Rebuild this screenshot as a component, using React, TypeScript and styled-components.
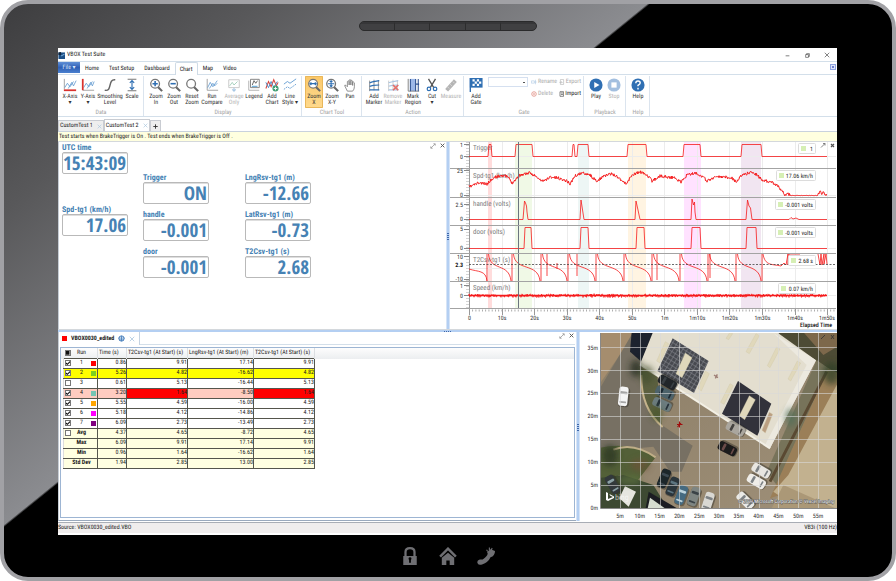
import React from "react";
import styled, { createGlobalStyle, css } from "styled-components";

const Global = createGlobalStyle`
  * { box-sizing: border-box; }
  body { margin: 0; background: #fff; text-rendering: geometricPrecision; }
  body, button, input, select, table {
    font-family: "Roboto Condensed", "Open Sans", sans-serif;
    font-size: 6px;
    line-height: 6px;
    color: #222;
    text-rendering: geometricPrecision;
  }
  button { border: 0; padding: 0; background: none; cursor: pointer; }
  svg { display: block; }
`;

/* ---------- tablet ---------- */

const Device = styled.div`
  min-height: 100vh;
  display: grid;
  grid-template-rows: 44px 1fr 42px;
  border: 4px solid #a1a1a5;
  border-radius: 28px;
  background: linear-gradient(141deg, #3d3d3f 0%, #58585a 16%, #8b8c90 40.3%, #000 40.5%);
`;

const Bezel = styled.div`
  display: flex;
  align-items: center;
  justify-content: center;
  gap: 20px;
`;

const Speaker = styled.div`
  display: grid;
  grid-template-columns: repeat(5, 1fr);
  width: 178px;
  height: 10px;
  border: 1px solid #2a2a2b;
  border-radius: 5px;
  background: #404042;
  overflow: hidden;
`;

const SpeakerSlot = styled.span`
  border-right: 1px solid #2c2c2d;
  border-top: 2px solid #363638;
  &:last-child { border-right: 0; }
`;

const HardKey = styled.button`
  width: 18px;
  height: 20px;
  color: #6f6f73;
`;

const Screen = styled.main`
  display: flex;
  flex-direction: column;
  margin: 0 55px 0 54px;
  padding-bottom: 2px;
  background: #fff;
`;

/* ---------- title and menu ---------- */

const TitleBar = styled.header`
  display: flex;
  align-items: center;
  gap: 2px;
  height: 14px;
  padding: 1px 1px 0 0;
  border-bottom: 1px solid #d3dfea;
`;

const AppTitle = styled.h1`
  margin: 0 auto 0 0;
  font-size: 6px;
  font-weight: 400;
  line-height: 8px;
`;

const WindowButton = styled.button`
  width: 18px;
  height: 8px;
  svg { margin: 0 auto; }
`;

const MenuBar = styled.nav`
  display: flex;
  align-items: flex-end;
  height: 13px;
  padding-right: 1px;
  border-bottom: 1px solid #d3dfea;
`;

const FileButton = styled.button`
  width: 22px;
  height: 11px;
  background: linear-gradient(#5f8fd6, #2f5fb5 50%, #4a80cf);
  color: #dbe8fb;
  align-self: flex-start;
`;

const MenuTab = styled.button<{ $active?: boolean }>`
  height: 12px;
  padding: 1px 4px 0;
  border: 1px solid transparent;
  border-bottom: 0;
  border-radius: 2px 2px 0 0;
  ${p => p.$active && css`
    margin-bottom: -1px;
    height: 13px;
    border-color: #cfdbe6;
    background: #fff;
  `}
`;

const CollapseButton = styled.button`
  width: 6px;
  height: 6px;
  margin: 0 0 4px auto;
  border: 1px solid #8fa4e0;
  background: linear-gradient(#6f7fd0, #6f7fd0) center / 2px 2px no-repeat, #dfe6fa;
`;

/* ---------- ribbon ---------- */

const Ribbon = styled.div`
  display: flex;
  height: 42px;
  padding-top: 1px;
  border-bottom: 1px solid #d3dfea;
`;

const Group = styled.section`
  display: flex;
  flex-direction: column;
  padding: 0 2px 0 3px;
  border-right: 1px solid #dbe4ee;
`;

const GroupTools = styled.div`
  display: flex;
  height: 32px;
`;

const GroupName = styled.h2`
  margin: 1px 0 0;
  font-size: 6px;
  font-weight: 400;
  line-height: 7px;
  text-align: center;
  color: #a3a3a3;
`;

const ToolButton = styled.button<{ $width: number; $selected?: boolean }>`
  display: flex;
  flex-direction: column;
  align-items: center;
  width: ${p => p.$width}px;
  padding-top: 2px;
  white-space: pre;
  border-radius: 1px;
  color: #333;
  svg { flex: none; margin-bottom: 2px; }
  &:disabled { color: #b3b3b3; }
  ${p => p.$selected && css`
    background: linear-gradient(#fbc766, #fcd07c 45%, #ffd98c);
    box-shadow: inset 0 0 0 1px #e9b75a;
  `}
`;

const GateSelect = styled.select`
  appearance: none;
  width: 40px;
  height: 10px;
  margin: 1px 3px 0;
  border: 1px solid #d5e0f0;
  background: linear-gradient(#555, #555) right 2px center / 2px 1px no-repeat #fff;
`;

const GateActions = styled.div`
  display: grid;
  grid-template-columns: 28px 22px;
  grid-auto-rows: 12px;
`;

const GateAction = styled.button`
  display: flex;
  align-items: center;
  gap: 1px;
  color: #222;
  &:disabled { color: #aaa; }
`;

/* ---------- documents ---------- */

const DocTabs = styled.div`
  display: flex;
  align-items: flex-end;
  height: 15px;
  border-bottom: 1px solid #c9d2dd;
`;

const DocTab = styled.button<{ $active?: boolean }>`
  display: flex;
  align-items: center;
  gap: 4px;
  height: ${p => (p.$active ? 12 : 11)}px;
  padding: 0 1px;
  border: 1px solid #c9ccd2;
  border-bottom: 0;
  background: ${p => (p.$active ? "#fff" : "#eeeeee")};
`;

const AddTab = styled(DocTab)`
  padding: 0 2px;
  color: #333;
`;

const Notice = styled.p`
  margin: 0;
  padding: 1px;
  height: 10px;
  line-height: 8px;
  background: #ffffdf;
  border-bottom: 1px solid #d4d8dc;
`;

const Workspace = styled.div`
  flex: 1;
  display: grid;
  grid-template-rows: 187fr 3px 189fr;
`;

const Split = styled.div<{ $left: number; $right: number }>`
  display: grid;
  grid-template-columns: minmax(0, ${p => p.$left}fr) 4px minmax(0, ${p => p.$right}fr);
`;

const Grip = styled.div<{ $vertical?: boolean }>`
  display: flex;
  align-items: center;
  justify-content: center;
  background: #b4cff2;
  &::after {
    content: "";
    width: ${p => (p.$vertical ? 2 : 8)}px;
    height: ${p => (p.$vertical ? 8 : 1)}px;
    background: repeating-linear-gradient(${p => (p.$vertical ? "0deg" : "90deg")}, #3f68ab 0 1px, transparent 1px 2px);
  }
  ${p => p.$vertical
    ? css`border-left: 1px solid #d6e4f7; border-right: 1px solid #d6e4f7;`
    : css`border-top: 1px solid #d4d8dc;`}
`;

const PanelButtons = styled.div`
  display: flex;
  align-items: flex-start;
  gap: 4px;
  margin-left: auto;
  padding: 1px 1px 0 0;
`;

const Gauges = styled.section`
  display: flex;
  border-left: 1px solid #c5ccd4;
  padding-left: 3px;
`;

const GaugeColumn = styled.div<{ $top: number; $gap: number; $width: number }>`
  display: flex;
  flex-direction: column;
  gap: ${p => p.$gap}px;
  width: ${p => p.$width}px;
  padding-top: ${p => p.$top}px;
`;

const Gauge = styled.div`
  width: 66px;
  color: #4682b4;
`;

const GaugeName = styled.div`
  font-size: 8px;
  line-height: 9px;
  font-weight: 700;
  white-space: nowrap;
`;

const GaugeValue = styled.output`
  display: block;
  height: 22px;
  padding-right: 1px;
  border: 1px solid #b9b9b9;
  border-radius: 2px;
  box-shadow: inset 0 1px 0 #dedede;
  font-family: "Open Sans Condensed", "Roboto Condensed", "Open Sans", sans-serif;
  font-size: 19px;
  font-weight: 700;
  line-height: 20px;
  text-align: right;
`;

/* ---------- results ---------- */

const Results = styled.section`
  display: flex;
  flex-direction: column;
  border-left: 1px solid #c5ccd4;
  border-bottom: 1px solid #9aa9bd;
  padding: 0 1px 2px;
`;

const ResultsHead = styled.div`
  display: flex;
  height: 13px;
`;

const FileTab = styled.button`
  display: flex;
  align-items: center;
  gap: 4px;
  padding: 0 4px 0 2px;
  border-right: 1px solid #c5d3e2;
  font-weight: 700;
`;

const TabRest = styled.div`
  flex: 1;
  display: flex;
  border-bottom: 1px solid #d3dfea;
`;

const Swatch = styled.span<{ $color: string }>`
  width: 5px;
  height: 5px;
  background: ${p => p.$color};
`;

const ResultsBox = styled.div`
  flex: 1;
  margin-top: 2px;
  border: 1px solid #9db5d3;
  padding-left: 2px;
  background: linear-gradient(#fdfdfd, #eceef0) top / 100% 11px no-repeat #fff;
`;

const ResultsTable = styled.table`
  width: 251px;
  table-layout: fixed;
  border-collapse: collapse;
  text-align: right;
  white-space: nowrap;
  th, td { height: 10px; padding: 0; }
`;

const HeadCell = styled.th<{ $width: number }>`
  width: ${p => p.$width}px;
  border-right: 1px solid #dcdfe2;
  font-weight: 400;
  text-align: left;
  text-indent: 1px;
`;

const Row = styled.tr<{ $fill?: string }>`
  background: ${p => p.$fill || "#fff"};
`;

const Cell = styled.td<{ $fill?: string }>`
  border: 1px solid #55554c;
  border-left-color: #444;
  background: ${p => p.$fill || "transparent"};
`;

const RunCell = styled.th`
  border: 1px solid #55554c;
  border-left-color: #ddd;
  text-align: left;
`;

const RunLabel = styled.label<{ $bold?: boolean }>`
  display: grid;
  grid-template-columns: 7px 19px 6px;
  align-items: center;
  padding-left: 1px;
  font-weight: ${p => (p.$bold ? 700 : 400)};
  text-align: center;
`;

const Check = styled.input<{ $mixed?: boolean }>`
  appearance: none;
  width: 6px;
  height: 6px;
  margin: 0;
  border: 1px solid #777;
  background: #fff;
  &:checked::after {
    content: "";
    display: block;
    width: 4px;
    height: 4px;
    background: #111;
    clip-path: ${p => (p.$mixed ? "inset(0)" : "polygon(0 35%, 35% 65%, 100% 0, 100% 35%, 35% 100%, 0 75%)")};
  }
`;

const StatusBar = styled.footer`
  display: flex;
  justify-content: space-between;
  height: 11px;
  margin-top: 1px;
  padding-top: 1px;
  border-top: 1px solid #a9adb5;
  background: #f0eded;
  line-height: 8px;
`;

const Plot = styled.svg`
  width: 100%;
  height: 100%;
`;

const PlotPanel = styled.section`
  contain: size;
  min-width: 0;
  min-height: 180px;
`;

/* ---------- icons ---------- */

const BLUE = "#2f6fb3";
const lens = <><circle cx="7" cy="6.500" r="5" stroke="#777" strokeWidth="1.500" /><path d="M10.500 10.500L15 15" stroke="#666" strokeWidth="2.400" /></>;

const icons: Record<string, React.ReactNode> = {
  xaxis: <><path d="M1.500 1V13" stroke="#999" /><path d="M2 11L5 6L8 10L12 4M6 12L10 5L12 9L15 3" stroke="#5c97cf" strokeWidth=".9" /><path d="M1 14H15" stroke="#d9322e" strokeWidth="2" /></>,
  yaxis: <><path d="M2 14H15" stroke="#999" /><path d="M3 11L6 6L9 10L13 4M7 12L11 5L13 9L15 4" stroke="#5c97cf" strokeWidth=".9" /><path d="M2 1V14" stroke="#d9322e" strokeWidth="2" /></>,
  smooth: <path d="M2 14C11 16 5 1 14 2" stroke="#666" strokeWidth="1.600" />,
  scale: <><path d="M3 1.500H13M3 14.500H13" stroke="#777" strokeWidth="1.200" /><path d="M8 3V13M5.500 5.500L8 3L10.500 5.500M5.500 10.500L8 13L10.500 10.500" stroke={BLUE} strokeWidth="1.300" /></>,
  zoomin: <>{lens}<path d="M7 3.500V9.500M4 6.500H10" stroke={BLUE} strokeWidth="1.800" /></>,
  zoomout: <>{lens}<path d="M4 6.500H10" stroke={BLUE} strokeWidth="1.800" /></>,
  zoomreset: lens,
  zoomx: <><circle cx="7" cy="6.500" r="5" fill="#fff" />{lens}<path d="M3.500 6.500H10.500M5 5L3.500 6.500L5 8M9 5L10.500 6.500L9 8" stroke={BLUE} strokeWidth="1.300" /></>,
  zoomxy: <>{lens}<path d="M3.500 6.500H10.500M7 3V10M5.500 4.500L7 3L8.500 4.500M5.500 8.500L7 10L8.500 8.500" stroke={BLUE} strokeWidth="1.200" /></>,
  compare: <><path d="M2.500 1V14H15" stroke="#999" /><path d="M3 11L6 5L9 10L14 3M5 12L9 6L11 9L14 6" stroke="#5c97cf" strokeWidth=".9" /></>,
  average: <><path d="M2 2H14V11H2Z" stroke="#c4c4c4" /><path d="M3 9L6 5L8 8L12 4" stroke="#9fcdb8" /><path d="M8 11V15M6 13L8 15L10 13" stroke="#a8c8e4" strokeWidth="1.300" /></>,
  legend: <><path d="M4 1.500H14V11H4Z" stroke="#777" /><path d="M2 3V14H14" stroke="#aaa" /><path d="M6 8L8 3L10 6L12 3" stroke="#555" /><path d="M5.500 9.500H12" stroke="#59a3d6" strokeWidth="1.200" /></>,
  addchart: <><path d="M1 12L4 4L7 10L10 2L13 9L15 5" stroke="#d9453c" strokeWidth="1.200" /><path d="M1 5L4 11L7 4L10 11L14 4" stroke="#4f89c4" strokeWidth="1.100" /><circle cx="12" cy="12" r="3.500" fill="#3f9d72" /><path d="M12 10V14M10 12H14" stroke="#fff" /></>,
  linestyle: <><path d="M1 7L5 4L8 6L15 1" stroke="#5c97cf" /><path d="M1 13L5 10L8 12L15 7" stroke="#5c97cf" strokeDasharray="2 1" /></>,
  pan: <path d="M5 15L2 9Q1.500 7.500 3.500 8.500L5 10V4Q6 2.500 7 4V8V2.500Q8 1 9 2.500V8V3Q10 2 11 3.500V8.500V5Q12 4 13 5.500V10Q13 13 11 15Z" fill="#fff" stroke="#777" strokeWidth=".9" />,
  addmarker: <><path d="M3 15V3M8 14V2M13 14V3" stroke="#666" strokeWidth=".8" /><path d="M3 5.500L6 4.500L14 3M3 9.500L7 8.500L14 8M3 13.500H14" stroke={BLUE} strokeWidth="1.400" /></>,
  delmarker: <><path d="M3 15V3M8 14V2M13 14V3" stroke="#bbb" strokeWidth=".8" /><path d="M3 5.500L6 4.500L14 3M3 9.500L7 8.500L14 8M3 13.500H14" stroke="#a9c6e3" strokeWidth="1.300" /><path d="M8 8L14 14M14 8L8 14" stroke="#e4706b" strokeWidth="2" /></>,
  region: <><path d="M5 1H11V15H5Z" fill="#9db8e8" /><path d="M2.500 1V15H15" stroke="#777" /><path d="M5 1V15M11 1V15M14 1V15M11 7H15" stroke="#2c4f8f" strokeWidth="1.200" /></>,
  cut: <><path d="M4 1L10 11M12 1L6 11" stroke="#555" strokeWidth="1.500" /><circle cx="4.500" cy="12.500" r="2" stroke={BLUE} strokeWidth="1.400" /><circle cx="11.500" cy="12.500" r="2" stroke={BLUE} strokeWidth="1.400" /></>,
  measure: <><path d="M3 14L13 3" stroke="#b5b5b5" strokeWidth="4.500" /><path d="M4 10L6 12M7 7L9 9M10 4L12 6" stroke="#e4e4e4" strokeWidth=".8" /></>,
  gate: <><path d="M1.500 0V16" stroke={BLUE} strokeWidth="1.600" /><path d="M1 0H15.500V11H1Z" fill={BLUE} /><path d="M4 1.500H6.500V4H4ZM9 1.500H11.500V4H9ZM6.500 4H9V6.500H6.500ZM11.500 4H14V6.500H11.500ZM4 6.500H6.500V9H4ZM9 6.500H11.500V9H9Z" fill="#fff" /></>,
  play: <><circle cx="8" cy="8" r="7.500" fill={BLUE} /><path d="M6 4.500L12 8L6 11.500Z" fill="#fff" /></>,
  stop: <><circle cx="8" cy="8" r="7.500" fill="#a3bfdf" /><path d="M5 5H11V11H5Z" fill="#fff" /></>,
  help: <><circle cx="8" cy="8" r="7.500" fill={BLUE} /><path d="M5.500 6Q5.500 3.500 8 3.500Q10.500 3.500 10.500 5.700Q10.500 7 8 8.500V9.500M8 11V13" stroke="#fff" strokeWidth="1.600" /></>,
  rename: <><path d="M1 5H9V11H1Z" stroke="#a9c6e3" strokeWidth="1.500" /><path d="M12 2V14M10 8H15" stroke="#a9c6e3" strokeWidth="1.500" /></>,
  remove: <><circle cx="8" cy="8" r="6" stroke="#e39a90" strokeWidth="2.500" /><path d="M6 6L10 10M10 6L6 10" stroke="#e39a90" strokeWidth="2" /></>,
  export: <path d="M4 1H13V15H4ZM1 9H9M6 6L9 9L6 12" stroke="#aaa" strokeWidth="1.500" />,
  import: <path d="M3 15V1H14V15ZM6 5H12M6 11L9 8L12 11" stroke="#333" strokeWidth="1.800" />,
  plus: <path d="M8 1V15M1 8H15" stroke="#333" strokeWidth="3" />,
  logo: <><path d="M1 1H16V16H1Z" fill="#1c4f86" /><path d="M1 1L7 0V7H1Z" fill="#12273f" /><path d="M7 9L15 5" stroke="#8fc0e8" strokeWidth="2" /></>,
  minimize: <path d="M2 9H14" stroke="#333" strokeWidth="2" />,
  restore: <path d="M2 5H11V14H2ZM5 5V2H14V11H11" stroke="#333" strokeWidth="1.800" />,
  close: <path d="M2 2L14 14M14 2L2 14" stroke="#333" strokeWidth="1.600" />,
  closeTab: <path d="M2 2L14 14M14 2L2 14" stroke="#a5c3dc" strokeWidth="2" />,
  expand: <path d="M3 13L13 3M9 2H14V7M2 9V14H7" stroke="#777" strokeWidth="1.600" />,
  shut: <path d="M2 2L14 14M14 2L2 14" stroke="#555" strokeWidth="3" />,
  globe: <><circle cx="8" cy="8" r="6" stroke={BLUE} strokeWidth="2" /><path d="M1 7H15M3 11H13M8 2V14" stroke={BLUE} strokeWidth="1.600" /></>,
  lock: <><path d="M2 8H14V16H2Z" fill="currentColor" /><path d="M4 8V4.500Q4 1 8 1Q12 1 12 4.500V8" stroke="currentColor" strokeWidth="2" /><path d="M8 10V14" stroke="#000" strokeWidth="1.600" /><circle cx="8" cy="10.500" r="1.300" fill="#000" /></>,
  home: <><path d="M1 8.500L8 1.500L15 8.500" stroke="currentColor" strokeWidth="2.200" /><path d="M2.500 9.500L8 5L13.500 9.500V16H9.500V12H6.500V16H2.500Z" fill="currentColor" /></>,
  phone: <><path d="M.5 14.500Q-.5 12 2.500 11L5 11Q9 8.500 9.500 6L9 4.500L12 2L16 3.500Q16 8 12 9Q10 13.500 4.500 15.500Q1.500 16.500 .5 14.500Z" fill="currentColor" /><path d="M9.500 4L8.500 2.500M11 3V.5M12.500 3L13.500 1" stroke="currentColor" /></>,
};

function Icon({ name, size = 14 }: { name: string; size?: number }) {
  return <svg width={size} height={size} viewBox="0 0 16 16" fill="none" aria-hidden="true">{icons[name]}</svg>;
}

/* ---------- ribbon content ---------- */

type Tool = { icon: string; text: string; width: number; off?: boolean; selected?: boolean };

const t = (icon: string, text: string, width = 18, extra: Partial<Tool> = {}): Tool => ({ icon, text, width, ...extra });

const dataTools = [t("xaxis", "X-Axis\n▾"), t("yaxis", "Y-Axis\n▾"), t("smooth", "Smoothing\nLevel", 26), t("scale", "Scale")];
const displayTools = [
  t("zoomin", "Zoom\nIn"), t("zoomout", "Zoom\nOut"), t("zoomreset", "Reset\nZoom"),
  t("compare", "Run\nCompare", 22), t("average", "Average\nOnly", 22, { off: true }),
  t("legend", "Legend"), t("addchart", "Add\nChart"), t("linestyle", "Line\nStyle ▾"),
];
const chartTools = [t("zoomx", "Zoom\nX", 18, { selected: true }), t("zoomxy", "Zoom\nX-Y"), t("pan", "Pan")];
const actionTools = [
  t("addmarker", "Add\nMarker"), t("delmarker", "Remove\nMarker", 20, { off: true }),
  t("region", "Mark\nRegion", 20), t("cut", "Cut\n▾"), t("measure", "Measure", 20, { off: true }),
];

function RibbonGroup({ name, tools, children }: { name: string; tools: Tool[]; children?: React.ReactNode }) {
  return (
    <Group>
      <GroupTools>
        {tools.map(x => (
          <ToolButton key={x.text} $width={x.width} $selected={x.selected} disabled={x.off}>
            <Icon name={x.icon} />{x.text}
          </ToolButton>
        ))}
        {children}
      </GroupTools>
      <GroupName>{name}</GroupName>
    </Group>
  );
}

/* ---------- chart ---------- */

function noise(seed: number) {
  let s = seed;
  return () => {
    s = (s * 16807) % 2147483647;
    return s / 2147483647 - 0.5;
  };
}

const X0 = 469, X1 = 827;

const bands = [
  { x: 488, w: 4, fill: "#ffdcdc" },
  { x: 515, w: 17, fill: "#f0f9e6" },
  { x: 578, w: 11, fill: "#edf6f5" },
  { x: 628, w: 18, fill: "#fff4e2" },
  { x: 684, w: 17, fill: "#ffe2ff" },
  { x: 741, w: 20, fill: "#f1e5f1" },
];

const square = (base: number, top: number, pulses: number[][]) =>
  `M${X0} ${base}` + pulses.map(([a, b]) => `H${a}L${a + 1} ${top}H${b - 1}L${b} ${base}`).join("") + `H${X1}`;

const triggerPath = square(156.5, 144.5, [[488, 492], [515, 533], [572, 575], [577, 589], [627, 647], [683, 701], [741, 762]]);
const doorPath = square(248.5, 227.5, [[524, 532], [580, 589], [636, 645], [691, 701], [746, 757]]);

const speedPoints: number[][] = [
  [469, 187], [478, 183], [487, 184], [493, 178], [502, 175], [508, 177], [512, 183], [520, 175], [529, 173], [534, 175],
  [540, 180], [544, 181], [550, 177], [558, 178], [567, 181], [570, 184], [575, 176], [582, 173], [589, 174], [593, 178],
  [597, 182], [603, 176], [612, 174], [618, 177], [626, 184], [632, 175], [640, 172], [647, 175], [652, 181], [660, 176],
  [668, 177], [675, 178], [681, 182], [687, 175], [696, 173], [702, 176], [707, 181], [715, 177], [725, 177], [732, 178],
  [736, 182], [742, 175], [752, 172], [757, 175], [762, 180], [772, 182], [778, 186], [782, 191], [785, 195], [788, 193],
  [790, 195.500], [818, 195.500], [820, 191], [822, 194], [824, 192], [825, 195], [827, 195],
];

function jitter(points: number[][], seed: number) {
  const r = noise(seed);
  let d = "";
  for (let i = 1; i < points.length; i++) {
    const [ax, ay] = points[i - 1], [bx, by] = points[i];
    const flat = ay > 195 && by > 195;
    for (let x = ax; x < bx; x += 0.5) {
      const y = ay + ((by - ay) * (x - ax)) / (bx - ax) + r() * (flat ? 0.3 : 3);
      d += `${d ? "L" : "M"}${x} ${y.toFixed(1)}`;
    }
  }
  return d;
}

const speedPath = jitter(speedPoints, 11);
const flatPath = (() => {
  const r = noise(5);
  let d = `M${X0} 295.500`;
  for (let x = X0; x < X1; x += 0.5) d += `L${x} ${(295.7 + r() * 3.6).toFixed(1)}`;
  return d;
})();

const handlePath = `M${X0} 219.500H523L524.500 201L525.500 203L526.500 206L527 212L528 219.500H580L581 200L583 213L584 219.500H635L636 201L638 210L640 219.500
 H691L692 199L693.500 205L694.500 202L695 212L696 219.500H746L747.500 200L749 206L750.500 208L752 219.500H789L791 217.500L793 219L796 218L799 219.500H${X1}`;

const asymptotes = [487, 512, 541, 568, 596, 624, 652, 680, 708, 736, 762];
const t2cPath = (() => {
  let d = "M469 269C478 272 486 270 487 281";
  for (let i = 0; i < asymptotes.length - 1; i++) {
    const a = asymptotes[i], b = asymptotes[i + 1];
    d += `M${a} 281V254M${a + 1.5} 254C${a + 3} 272 ${b - 3} 262 ${b - 1} 281`;
  }
  d += "M762 281V254M763 254C765 266 772 264 781 266L784 263L786 265L788 254V265L789 254H800";
  d += "M547 254V276M577 254V276M657 254V280M710 254V278M557 269V263";
  d += "M818 254L820 265L821 254L822 265L824 254V264L826 254L827 264";
  return d;
})();

const legends = [
  { x: 798, y: 143, w: 18, text: "1" },
  { x: 776, y: 170, w: 40, text: "17.06 km/h" },
  { x: 775, y: 199, w: 41, text: "-0.001 volts" },
  { x: 775, y: 227, w: 41, text: "-0.001 volts" },
  { x: 788, y: 255, w: 28, text: "2.68 s" },
  { x: 778, y: 283, w: 38, text: "0.07 km/h" },
];

const series = [[149, "Trigger"], [177, "Spd-tg1 (km/h)"], [205, "handle (volts)"], [233, "door (volts)"], [261, "T2Csv-tg1 (s)"], [289, "Speed (km/h)"]] as const;
const yLabels = [[147, "1"], [159, "0"], [173, "25"], [197, "0"], [207, "2.5"], [221, "0"], [231, "5"], [250, "0"], [259, "10"], [281, "-10"], [288, "1"], [298, "0"]] as const;
const times = ["0", "10s", "20s", "30s", "40s", "50s", "1m", "1m10s", "1m20s", "1m30s", "1m40s", "1m50s"];

function ChartPanel() {
  return (
    <PlotPanel>
      <Plot viewBox="450 142 387 187" preserveAspectRatio="xMidYMin meet" role="img" aria-label="Channel charts" fontSize="6">
        {bands.map(b => <rect key={b.x} x={b.x} y="142" width={b.w} height="166" fill={b.fill} />)}
        <g stroke="#ececec">
          {times.map((_, i) => <path key={i} d={`M${469.5 + Math.round(i * 32.55)} 142V308`} />)}
          {[156.5, 195.5, 219.5, 248.5, 268.5, 295.5].map(y => <path key={y} d={`M470 ${y}H836`} />)}
        </g>
        <g fill="#808080" fontSize="7">{series.map(([y, s]) => <text key={s} x="473" y={y + 1}>{s}</text>)}</g>
        <path d="M469.500 142V308" stroke="#999" />
        <path d="M467.500 142V308" stroke="#aaa" strokeWidth="3" strokeDasharray=".6 2.400" />
        <g stroke="#888">{[144.5, 156.5, 170.5, 195.5, 204.5, 219.5, 229.5, 248.5, 256.5, 279.5, 285.5, 295.5].map(y => <path key={y} d={`M464 ${y}H469`} />)}</g>
        <g fill="none" stroke="#f5191b" strokeWidth=".8">
          <path d={triggerPath} /><path d={speedPath} strokeWidth="1" /><path d={handlePath} />
          <path d={doorPath} /><path d={t2cPath} /><path d={flatPath} />
          <path d="M469 295.500H827" strokeWidth="1.600" />
        </g>
        <path d="M469 264.500H836" stroke="#444" strokeDasharray="2 1.500" strokeWidth=".8" />
        <path d="M518.500 142V308" stroke="#6b7480" />
        <g stroke="#a3a3a3">{[168.5, 197.5, 225.5, 253.5, 281.5, 308.5].map(y => <path key={y} d={`M450 ${y}H836`} />)}</g>
        <path d="M469 310.500H836" stroke="#999" strokeWidth="2" strokeDasharray=".8 2.455" />
        <g stroke="#999">{times.map((_, i) => <path key={i} d={`M${469.5 + Math.round(i * 32.55)} 309V315`} />)}</g>
        <g textAnchor="end" fill="#333">
          {yLabels.map(([y, s]) => <text key={y} x="463" y={y}>{s}</text>)}
          <text x="463" y="267" fontWeight="700" fill="#111">2.3</text>
        </g>
        <g textAnchor="middle" fill="#333">
          {times.map((s, i) => <text key={s} x={Math.min(469.5 + i * 32.55, 827)} y="320">{s}</text>)}
        </g>
        <text x="832" y="327" fontSize="6" fontWeight="500" textAnchor="end" fill="#111">Elapsed Time</text>
        {legends.map(l => (
          <g key={l.y}>
            <rect x={l.x + 0.5} y={l.y + 0.5} width={l.w - 1} height="10" rx="1" fill="#fff" stroke="#dcdcdc" />
            <rect x={l.x + 3} y={l.y + 3} width="5" height="5" fill="#d6efb4" />
            <text x={l.x + l.w - 3} y={l.y + 8} textAnchor="end" fill="#222">{l.text}</text>
          </g>
        ))}
        <path d="M821 147.500L825 143.500M823 143.500H825V145.500" stroke="#666" fill="none" strokeWidth=".8" />
        <path d="M831 144L834 147M834 144L831 147" stroke="#555" strokeWidth="1.200" />
      </Plot>
    </PlotPanel>
  );
}

/* ---------- map ---------- */

type CarProps = { x: number; y: number; a: number; fill: string; glass?: string };

function Car({ x, y, a, fill, glass = "#7d8285" }: CarProps) {
  return (
    <g transform={`translate(${x} ${y}) rotate(${a})`}>
      <rect x="-14" y="-26" width="33" height="58" rx="10" fill="#2d2a24" opacity=".45" />
      <rect x="-14" y="-29" width="28" height="58" rx="9" fill={fill} />
      <rect x="-11" y="-15" width="22" height="8" rx="3" fill={glass} />
      <rect x="-10" y="15" width="20" height="5" rx="2" fill={glass} />
    </g>
  );
}

const cars: CarProps[] = [
  { x: 160, y: 214, a: 6, fill: "#f4f4f4", glass: "#a5a5a5" },
  { x: 292, y: 172, a: -60, fill: "#22262a", glass: "#3a4045" },
  { x: 284, y: 204, a: -65, fill: "#4d626a", glass: "#1f2a33" },
  { x: 276, y: 238, a: -65, fill: "#6c7c7f", glass: "#26323a" },
  { x: 496, y: 312, a: -62, fill: "#aaa69e", glass: "#45423f" },
  { x: 472, y: 371, a: -63, fill: "#1d1a1b", glass: "#6a4c4a" },
  { x: 573, y: 437, a: -60, fill: "#e8e6e1" },
  { x: 559, y: 469, a: -60, fill: "#efede8" },
  { x: 526, y: 527, a: -45, fill: "#e9e9e6" },
  { x: 282, y: 460, a: 22, fill: "#1f2529", glass: "#3d4a52" },
  { x: 308, y: 484, a: 22, fill: "#2b343a", glass: "#5b7480" },
  { x: 334, y: 510, a: 20, fill: "#456a80", glass: "#bcd3dc" },
  { x: 372, y: 514, a: 20, fill: "#7e8582", glass: "#3a4346" },
  { x: 414, y: 530, a: 18, fill: "#d9d8d3" },
  { x: 128, y: 478, a: -30, fill: "#30383a", glass: "#8ba0a5" },
];

const mapX = [5, 10, 15, 20, 25, 30, 35, 40, 45, 50, 55];
const mapY = [0, 5, 10, 15, 20, 25, 30, 35];

function MapPanel() {
  return (
    <PlotPanel>
      <Plot viewBox="580 332 257 189" preserveAspectRatio="xMidYMin slice" role="img" aria-label="Aerial map" fontSize="6">
        <defs>
          <clipPath id="photo"><rect x="92" y="24" width="710" height="525" /></clipPath>
          <filter id="soft"><feGaussianBlur stdDeviation="2.200" /></filter>
          <filter id="shade" x="-30%" y="-30%" width="160%" height="160%"><feGaussianBlur stdDeviation="9" /></filter>
          <pattern id="cells" width="12" height="12" patternUnits="userSpaceOnUse" patternTransform="rotate(32)">
            <rect width="12" height="12" fill="#474950" /><path d="M0 0H12M0 0V12" stroke="#8b8d92" strokeWidth="3" />
          </pattern>
          <linearGradient id="ground" x1="0" y1="0" x2="1" y2="1"><stop stopColor="#8b7d66" /><stop offset="1" stopColor="#9f9078" /></linearGradient>
        </defs>
        <g transform="translate(570 325) scale(.33333)">
          <g clipPath="url(#photo)">
            <g filter="url(#soft)">
              <rect x="80" y="10" width="740" height="550" fill="url(#ground)" />
              <path d="M80 10H205L80 190Z" fill="#a58d6e" />
              <path d="M190 20L90 190V380L250 365L280 410L300 440L335 440L368 362L275 300L215 160L225 40Z" fill="#777063" />
              <path d="M610 10H810V150L740 110L640 60Z" fill="#4d4b35" />
              <path d="M690 10H810V60L760 90Z" fill="#7d684b" />
              <path d="M740 105L775 130L620 480L590 440Z" fill="#77735a" />
              <path d="M775 130L815 150L660 500L600 520Z" fill="#9b7f58" />
              <path d="M800 180L820 160V560H700L610 500L655 450Z" fill="#c2b18f" />
              <path d="M640 480L820 560H600Z" fill="#ab9877" />
              <path d="M770 140L600 470" stroke="#5a4930" strokeWidth="9" />
              <path d="M215 130L262 155L275 300Q232 270 220 210Z" fill="#5c613f" />
              <path d="M214 150Q212 250 278 306" stroke="#c5b38c" strokeWidth="6" fill="none" />
              <path d="M80 370Q180 345 257 397L200 470L150 450L80 480Z" fill="#536038" />
              <path d="M130 374Q190 350 257 397" stroke="#bfae87" strokeWidth="6" fill="none" />
              <path d="M80 460L160 450L250 480L300 560H80Z" fill="#3c4830" />
              <path d="M185 20H252L214 110L180 80Z" fill="#1f242d" />
              <path d="M252 14H610L738 106L600 370L210 118Z" fill="#e3decf" />
              <path d="M610 24L738 106L600 370L585 360L710 120Z" fill="#ece9df" />
              <path d="M210 118L600 370" stroke="#f3f0e5" strokeWidth="6" />
              <path d="M308 40L416 108L372 204L262 138Z" fill="url(#cells)" />
              <path d="M504 168L604 236L562 332L456 266Z" fill="#30303a" />
              <g fill="#e0d8bb" stroke="#cdc5a5" strokeWidth="1">
                <path d="M346 84L366 98L336 158L318 146Z" /><path d="M538 212L556 224L524 284L508 272Z" />
                <path d="M286 50L296 56L270 114L260 108Z" /><path d="M406 138L418 146L394 198L384 190Z" />
                <path d="M480 176L490 182L462 238L452 232Z" /><path d="M558 26L568 32L538 86L528 80Z" />
                <path d="M620 66L630 72L600 128L592 122Z" /><path d="M682 108L692 114L662 168L654 162Z" />
                <path d="M598 262L608 268L586 324L576 316Z" fill="#bb9f82" /><path d="M480 22L488 26L476 44L468 40Z" />
              </g>
              <path d="M432 150L444 158M436 160L442 148" stroke="#9d7d75" strokeWidth="4" />
              <path d="M236 500L330 555H226Z" fill="#1b1f22" />
              <path d="M240 518L292 555H232Z" fill="#d6dccf" />
              {cars.map(c => <Car key={`${c.x}-${c.y}`} {...c} />)}
              <path d="M165 484L198 500L176 545L148 520Z" fill="#e6e6e0" />
            </g>
            <g filter="url(#shade)" opacity=".75">
              <ellipse cx="198" cy="130" rx="18" ry="26" fill="#22291f" /><ellipse cx="230" cy="150" rx="20" ry="28" fill="#44502f" />
              <ellipse cx="120" cy="392" rx="24" ry="32" fill="#2b3524" /><ellipse cx="210" cy="420" rx="28" ry="18" fill="#6d5237" />
              <ellipse cx="260" cy="266" rx="16" ry="20" fill="#48582c" /><ellipse cx="180" cy="465" rx="36" ry="12" fill="#5f7440" />
              <ellipse cx="785" cy="145" rx="26" ry="34" fill="#2f3f26" /><ellipse cx="662" cy="278" rx="16" ry="28" fill="#51705a" />
            </g>
          </g>
        </g>
        <g stroke="#d9d9d9" strokeOpacity=".6">
          {mapX.map((m, i) => <path key={m} d={`M${Math.round(620 + i * 19.8) + 0.5} 333V508`} />)}
          {mapY.slice(1).map((m, i) => <path key={m} d={`M600 ${Math.round(485 - i * 23) + 0.5}H837`} />)}
        </g>
        <path d="M600.500 333V508.500H837" stroke="#888" fill="none" />
        <g textAnchor="end" fill="#333">{mapY.map((m, i) => <text key={m} x="598" y={510 - Math.round(i * 22.9)}>{m}m</text>)}</g>
        <g textAnchor="middle" fill="#333">{mapX.map((m, i) => <text key={m} x={620 + i * 19.8} y="518">{m}m</text>)}</g>
        <path d="M677 424.500H682.500M679.500 421.500V427.500M681 423L677.500 427" stroke="#a00c0c" strokeWidth="1.100" />
        <path d="M606 492L608 493V499L613 497L610 495.500L609.500 494L614 496.500V498L608 501L606 500Z" fill="#fff" />
        <text x="615" y="500" fontSize="8" fill="#fff" fillOpacity=".6">bing</text>
        <text x="834" y="503" fontSize="5" textAnchor="end" fill="#fff" stroke="#555" strokeWidth=".8" paintOrder="stroke">© 2021 Microsoft Corporation  © Vexcel Imaging</text>
        <path d="M821 339L825 335M831 335L834 339M834 335L831 339" stroke="#333" strokeWidth=".8" />
      </Plot>
    </PlotPanel>
  );
}

/* ---------- results data ---------- */

type Run = { name: string; on?: boolean; color?: string; fill?: string; hot?: boolean; v: string[] };

const runs: Run[] = [
  { name: "1", on: true, color: "#ff0000", v: ["0.86", "9.91", "17.14", "9.91"] },
  { name: "2", on: true, color: "#7ccf1f", fill: "#ffff00", v: ["5.26", "4.82", "-16.62", "4.82"] },
  { name: "3", on: false, v: ["0.61", "5.13", "-16.44", "5.13"] },
  { name: "4", on: true, color: "#76c5b4", fill: "#ffccc0", hot: true, v: ["3.20", "1.64", "-8.50", "1.64"] },
  { name: "5", on: true, color: "#ffa500", v: ["5.55", "4.59", "-16.00", "4.59"] },
  { name: "6", on: true, color: "#ff00ff", v: ["5.18", "4.12", "-14.86", "4.12"] },
  { name: "7", on: true, color: "#800080", v: ["6.09", "2.73", "-13.49", "2.73"] },
];

const stats: Run[] = [
  { name: "Avg", on: false, v: ["4.37", "4.65", "-8.72", "4.65"] },
  { name: "Max", v: ["6.09", "9.91", "17.14", "9.91"] },
  { name: "Min", v: ["0.96", "1.64", "-16.62", "1.64"] },
  { name: "Std Dev", v: ["1.94", "2.85", "13.00", "2.85"] },
];

function RunRow({ run, stat }: { run: Run; stat?: boolean }) {
  return (
    <Row $fill={stat ? "#ffffe1" : run.fill}>
      <RunCell scope="row">
        <RunLabel $bold={stat}>
          {run.on === undefined ? <span /> : <Check type="checkbox" defaultChecked={run.on} />}
          <span>{run.name}</span>
          {run.color && <Swatch $color={run.color} />}
        </RunLabel>
      </RunCell>
      {run.v.map((v, i) => <Cell key={i} $fill={run.hot && i % 2 === 1 ? "#ff0000" : undefined}>{v}</Cell>)}
    </Row>
  );
}

const GaugeItem = ({ name, value }: { name: string; value: string }) => (
  <Gauge><GaugeName>{name}</GaugeName><GaugeValue aria-label={name}>{value}</GaugeValue></Gauge>
);

const PanelTools = () => (
  <PanelButtons>
    <button aria-label="Expand"><Icon name="expand" size={6} /></button>
    <button aria-label="Close"><Icon name="shut" size={5} /></button>
  </PanelButtons>
);

export default function App() {
  return (
    <>
      <Global />
      <Device>
        <Bezel><Speaker>{[0, 1, 2, 3, 4].map(i => <SpeakerSlot key={i} />)}</Speaker></Bezel>
        <Screen>
          <TitleBar>
            <Icon name="logo" size={7} />
            <AppTitle>VBOX Test Suite</AppTitle>
            <WindowButton aria-label="Minimize"><Icon name="minimize" size={5} /></WindowButton>
            <WindowButton aria-label="Restore"><Icon name="restore" size={5} /></WindowButton>
            <WindowButton aria-label="Close"><Icon name="close" size={6} /></WindowButton>
          </TitleBar>
          <MenuBar>
            <FileButton>File ▾</FileButton>
            {["Home", "Test Setup", "Dashboard", "Chart", "Map", "Video"].map(m => <MenuTab key={m} $active={m === "Chart"}>{m}</MenuTab>)}
            <CollapseButton aria-label="Collapse ribbon" />
          </MenuBar>
          <Ribbon>
            <RibbonGroup name="Data" tools={dataTools} />
            <RibbonGroup name="Display" tools={displayTools} />
            <RibbonGroup name="Chart Tool" tools={chartTools} />
            <RibbonGroup name="Action" tools={actionTools} />
            <RibbonGroup name="Gate" tools={[t("gate", "Add\nGate")]}>
              <GateSelect aria-label="Gate" />
              <GateActions>
                <GateAction disabled><Icon name="rename" size={6} />Rename</GateAction>
                <GateAction disabled><Icon name="export" size={6} />Export</GateAction>
                <GateAction disabled><Icon name="remove" size={6} />Delete</GateAction>
                <GateAction><Icon name="import" size={6} />Import</GateAction>
              </GateActions>
            </RibbonGroup>
            <RibbonGroup name="Playback" tools={[t("play", "Play"), t("stop", "Stop", 18, { off: true })]} />
            <RibbonGroup name="Help" tools={[t("help", "Help")]} />
          </Ribbon>
          <DocTabs>
            <DocTab>CustomTest 1 <Icon name="closeTab" size={5} /></DocTab>
            <DocTab $active>CustomTest 2 <Icon name="closeTab" size={5} /></DocTab>
            <AddTab aria-label="Add test"><Icon name="plus" size={5} /></AddTab>
          </DocTabs>
          <Notice>Test starts when BrakeTrigger is On . Test ends when BrakeTrigger is Off .</Notice>
          <Workspace>
            <Split $left={388} $right={387}>
              <Gauges>
                <GaugeColumn $top={1} $gap={31} $width={81}>
                  <GaugeItem name="UTC time" value="15:43:09" />
                  <GaugeItem name="Spd-tg1 (km/h)" value="17.06" />
                </GaugeColumn>
                <GaugeColumn $top={31} $gap={6} $width={102}>
                  <GaugeItem name="Trigger" value="ON" />
                  <GaugeItem name="handle" value="-0.001" />
                  <GaugeItem name="door" value="-0.001" />
                </GaugeColumn>
                <GaugeColumn $top={31} $gap={6} $width={66}>
                  <GaugeItem name="LngRsv-tg1 (m)" value="-12.66" />
                  <GaugeItem name="LatRsv-tg1 (m)" value="-0.73" />
                  <GaugeItem name="T2Csv-tg1 (s)" value="2.68" />
                </GaugeColumn>
                <PanelTools />
              </Gauges>
              <Grip $vertical />
              <ChartPanel />
            </Split>
            <Grip />
            <Split $left={518} $right={257}>
              <Results>
                <ResultsHead>
                  <FileTab>
                    <Swatch $color="#ff0000" />VBOX0030_edited
                    <Icon name="globe" size={7} /><Icon name="closeTab" size={6} />
                  </FileTab>
                  <TabRest><PanelTools /></TabRest>
                </ResultsHead>
                <ResultsBox>
                  <ResultsTable>
                    <thead>
                      <tr>
                        <HeadCell $width={34}><RunLabel><Check type="checkbox" defaultChecked $mixed /><span>Run</span></RunLabel></HeadCell>
                        <HeadCell $width={29}>Time (s)</HeadCell>
                        <HeadCell $width={61}>T2Csv-tg1 (At Start) (s)</HeadCell>
                        <HeadCell $width={66}>LngRsv-tg1 (At Start) (m)</HeadCell>
                        <HeadCell $width={61}>T2Csv-tg1 (At Start) (s)</HeadCell>
                      </tr>
                    </thead>
                    <tbody>
                      {runs.map(r => <RunRow key={r.name} run={r} />)}
                      {stats.map(r => <RunRow key={r.name} run={r} stat />)}
                    </tbody>
                  </ResultsTable>
                </ResultsBox>
              </Results>
              <Grip $vertical />
              <MapPanel />
            </Split>
          </Workspace>
          <StatusBar><span>Source: VBOX0030_edited.VBO</span><span>VB3i (100 Hz)</span></StatusBar>
        </Screen>
        <Bezel>
          <HardKey aria-label="Lock"><Icon name="lock" size={18} /></HardKey>
          <HardKey aria-label="Home"><Icon name="home" size={18} /></HardKey>
          <HardKey aria-label="Phone"><Icon name="phone" size={18} /></HardKey>
        </Bezel>
      </Device>
    </>
  );
}
